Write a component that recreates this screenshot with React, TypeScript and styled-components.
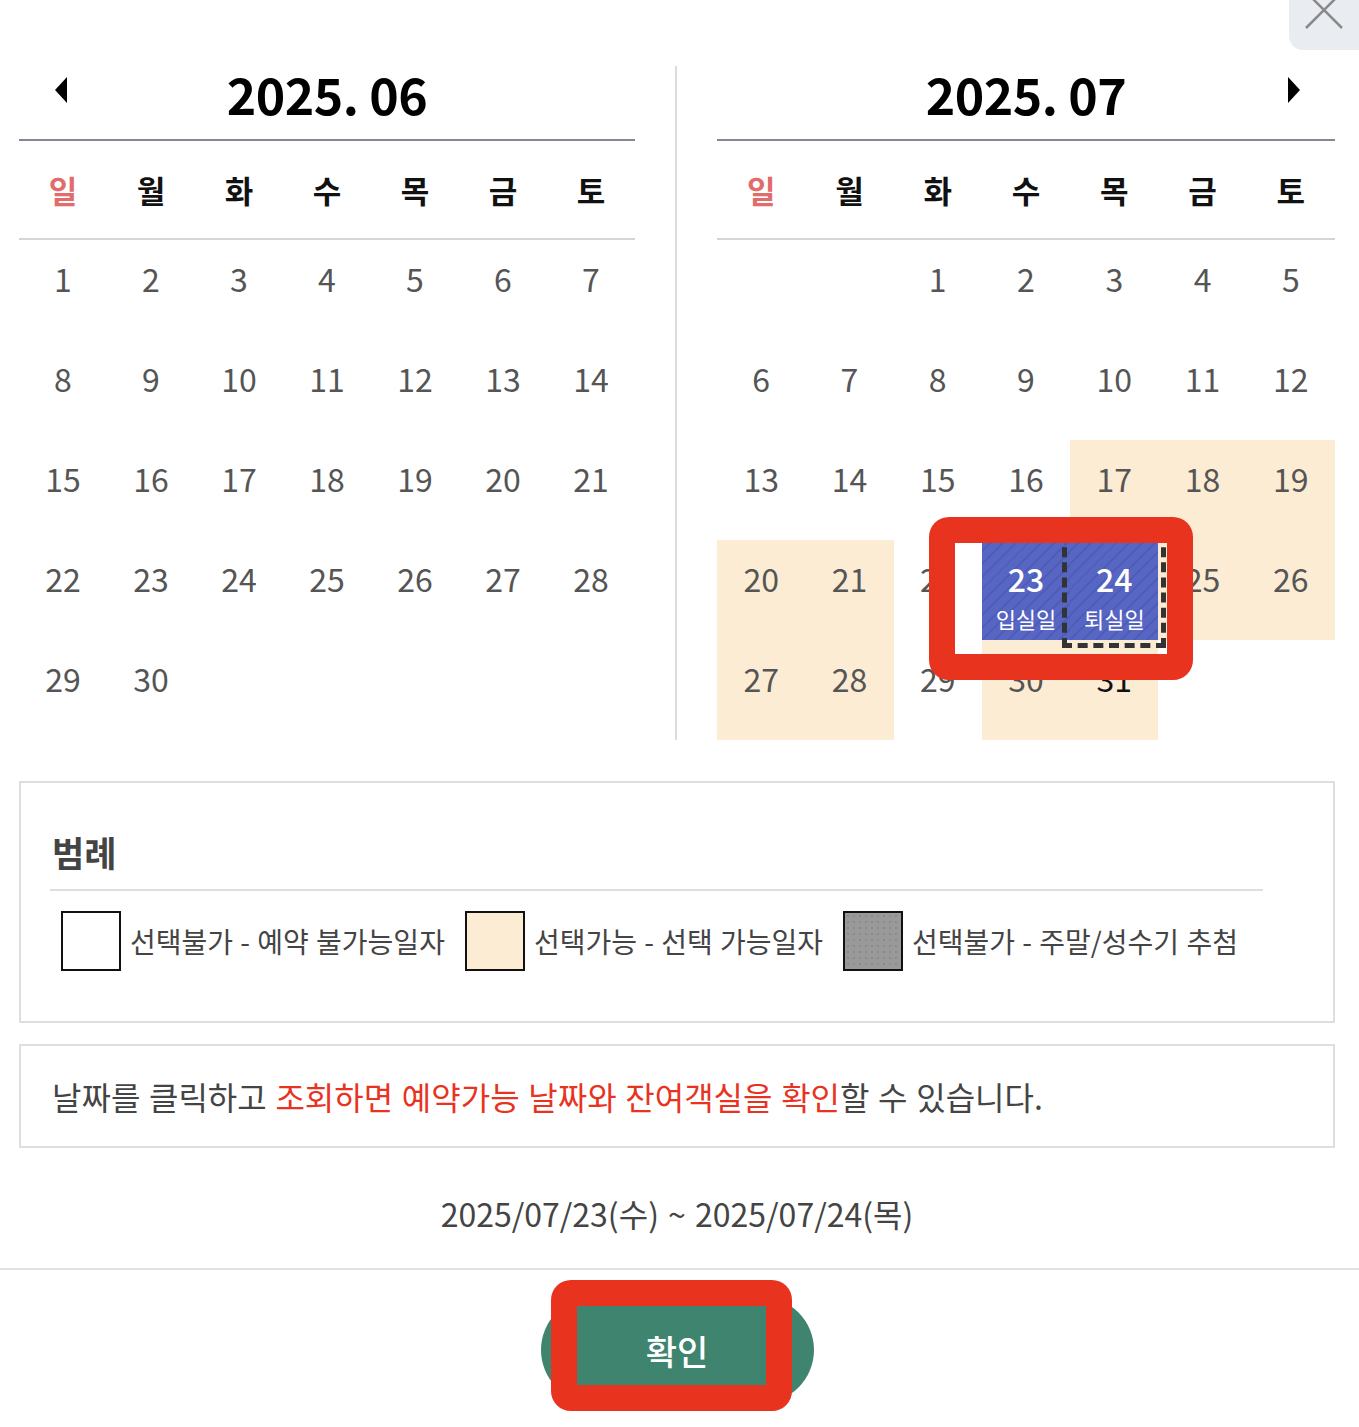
import React from 'react';
import styled, { createGlobalStyle, css } from 'styled-components';

const GlobalStyle = createGlobalStyle`
  html, body {
    margin: 0;
    padding: 0;
    background: #fff;
  }
  body {
    font-family: "Noto Sans CJK KR", "Noto Sans", sans-serif;
    color: #444;
  }
  * {
    box-sizing: border-box;
  }
`;

const Page = styled.div`
  position: relative;
  width: 1359px;
  min-height: 1427px;
  overflow: hidden;
`;

const CloseButton = styled.button`
  position: absolute;
  top: -20px;
  right: 0;
  width: 70px;
  height: 70px;
  border: 0;
  padding: 0;
  background: #e9ecf0;
  border-bottom-left-radius: 14px;
  display: flex;
  align-items: center;
  justify-content: center;
  padding-bottom: 10px;
  cursor: pointer;
`;

const Content = styled.div`
  padding: 50px 24px 0 19px;
`;

const Calendars = styled.div`
  display: flex;
  align-items: stretch;
`;

const Calendar = styled.div<{ $w: number }>`
  width: ${(p) => p.$w}px;
  flex: none;
`;

const Divider = styled.div`
  width: 82px;
  flex: none;
  display: flex;
  justify-content: center;
  padding-top: 16px;
  &::before {
    content: '';
    width: 2px;
    background: #dcdcdc;
  }
`;

const TitleRow = styled.div`
  display: grid;
  grid-template-columns: 1fr auto 1fr;
  align-items: center;
  height: 91px;
  border-bottom: 2px solid #858892;
  padding-bottom: 3px;
`;

const Title = styled.h2`
  margin: 0;
  font-size: 50px;
  font-weight: 700;
  color: #000;
  letter-spacing: -0.5px;
  line-height: 1;
`;

const Arrow = styled.span<{ $dir: 'prev' | 'next' }>`
  width: 0;
  height: 0;
  border-top: 13px solid transparent;
  border-bottom: 13px solid transparent;
  margin-bottom: 6px;
  ${(p) =>
    p.$dir === 'prev'
      ? css`
          justify-self: start;
          margin-left: 36px;
          border-right: 12px solid #000;
        `
      : css`
          justify-self: end;
          margin-right: 35px;
          border-left: 12px solid #000;
        `}
`;

const WeekRow = styled.div`
  display: grid;
  grid-template-columns: repeat(7, 1fr);
  height: 99px;
  align-items: center;
  border-bottom: 2px solid #d5d5d5;
`;

const WeekDay = styled.span<{ $sun?: boolean }>`
  text-align: center;
  font-size: 31px;
  font-weight: 700;
  color: ${(p) => (p.$sun ? '#e26b6b' : '#111')};
`;

const DayGrid = styled.div`
  position: relative;
  display: grid;
  grid-template-columns: repeat(7, 1fr);
  grid-auto-rows: 100px;
`;

type Tone = 'none' | 'cream' | 'sel';

const Day = styled.div<{ $tone: Tone; $dark?: boolean; $checkout?: boolean }>`
  display: flex;
  flex-direction: column;
  align-items: center;
  padding-top: 16px;
  color: ${(p) => (p.$dark ? '#111' : '#555')};
  background: ${(p) => (p.$tone === 'cream' ? '#fcecd4' : 'transparent')};
  ${(p) =>
    p.$tone === 'sel' &&
    css`
      color: #fff;
      background: repeating-linear-gradient(
        135deg,
        #5765c3 0 7px,
        #4f5cb9 7px 9px
      );
    `}
  ${(p) =>
    p.$checkout &&
    css`
      outline: 5px dashed #333;
      outline-offset: 3px;
      position: relative;
      z-index: 1;
    `}
`;

const DayNum = styled.span<{ $sel?: boolean }>`
  font-size: 32px;
  line-height: 44px;
  font-weight: ${(p) => (p.$sel ? 500 : 400)};
`;

const DayLabel = styled.span`
  font-size: 22px;
  line-height: 36px;
  color: #fff;
`;

const Highlight = styled.div<{ $l: number; $t: number; $w: number; $h: number }>`
  position: absolute;
  left: ${(p) => p.$l}px;
  top: ${(p) => p.$t}px;
  width: ${(p) => p.$w}px;
  height: ${(p) => p.$h}px;
  border: 26px solid #e8331f;
  border-radius: 20px;
  z-index: 5;
  pointer-events: none;
`;

const LegendBox = styled.section`
  margin-top: 41px;
  border: 2px solid #dedede;
  padding: 44px 70px 50px 29px;
`;

const LegendTitle = styled.h3`
  margin: 0;
  font-size: 35px;
  line-height: 50px;
  font-weight: 700;
  color: #444;
  padding: 0 0 12px 2px;
  border-bottom: 2px solid #dedede;
`;

const LegendRow = styled.div`
  display: flex;
  align-items: center;
  gap: 20px;
  margin-top: 20px;
  padding-left: 11px;
`;

const LegendItem = styled.div`
  display: flex;
  align-items: center;
  gap: 9px;
  font-size: 28px;
  color: #444;
  word-spacing: 1px;
`;

const Swatch = styled.span<{ $kind: 'white' | 'cream' | 'gray' }>`
  width: 60px;
  height: 60px;
  border: 2px solid #111;
  flex: none;
  background: ${(p) =>
    p.$kind === 'white' ? '#fff' : p.$kind === 'cream' ? '#fcecd4' : '#999'};
  ${(p) =>
    p.$kind === 'gray' &&
    css`
      background-image: radial-gradient(#8a8a8a 1px, transparent 1.5px);
      background-size: 6px 6px;
    `}
`;

const NoticeBox = styled.div`
  margin-top: 21px;
  border: 2px solid #dedede;
  height: 104px;
  padding: 0 31px;
  display: flex;
  align-items: center;
  font-size: 32px;
  color: #444;
  word-spacing: 1.5px;
`;

const Red = styled.span`
  color: #e8331f;
`;

const RangeText = styled.p`
  margin: 0;
  padding: 42px 0 32px;
  text-align: center;
  font-size: 32px;
  line-height: 46px;
  color: #444;
  word-spacing: 2px;
`;

const Footer = styled.footer`
  border-top: 2px solid #e2e2e2;
  padding: 27px 0 25px;
  display: flex;
  justify-content: center;
`;

const ButtonWrap = styled.div`
  position: relative;
  margin-left: -5px;
`;

const ConfirmButton = styled.button`
  width: 273px;
  height: 106px;
  border: 0;
  border-radius: 53px;
  background: #3f846f;
  color: #fff;
  font-family: inherit;
  font-size: 34px;
  font-weight: 500;
  cursor: pointer;
`;

type Cell = {
  d?: number;
  tone?: Tone;
  label?: string;
  dark?: boolean;
  checkout?: boolean;
};

const WEEK = ['일', '월', '화', '수', '목', '금', '토'];

const junCells: Cell[] = Array.from({ length: 30 }, (_, i) => ({ d: i + 1 }));

const creamJul = new Set([17, 18, 19, 20, 21, 25, 26, 27, 28, 30, 31]);
const julCells: Cell[] = [
  {},
  {},
  ...Array.from({ length: 31 }, (_, i) => {
    const d = i + 1;
    if (d === 23) return { d, tone: 'sel' as Tone, label: '입실일' };
    if (d === 24) return { d, tone: 'sel' as Tone, label: '퇴실일', checkout: true };
    return {
      d,
      tone: (creamJul.has(d) ? 'cream' : 'none') as Tone,
      dark: d === 31,
    };
  }),
];

function MonthView({
  title,
  cells,
  width,
  arrow,
  children,
}: {
  title: string;
  cells: Cell[];
  width: number;
  arrow: 'prev' | 'next';
  children?: React.ReactNode;
}) {
  return (
    <Calendar $w={width}>
      <TitleRow>
        {arrow === 'prev' ? <Arrow $dir="prev" /> : <span />}
        <Title>{title}</Title>
        {arrow === 'next' ? <Arrow $dir="next" /> : <span />}
      </TitleRow>
      <WeekRow>
        {WEEK.map((w, i) => (
          <WeekDay key={w} $sun={i === 0}>
            {w}
          </WeekDay>
        ))}
      </WeekRow>
      <DayGrid>
        {cells.map((c, i) => (
          <Day key={i} $tone={c.tone ?? 'none'} $dark={c.dark} $checkout={c.checkout}>
            {c.d && <DayNum $sel={c.tone === 'sel'}>{c.d}</DayNum>}
            {c.label && <DayLabel>{c.label}</DayLabel>}
          </Day>
        ))}
        {children}
      </DayGrid>
    </Calendar>
  );
}

export default function App() {
  return (
    <Page>
      <GlobalStyle />
      <CloseButton aria-label="닫기">
        <svg width="40" height="40" viewBox="0 0 40 40">
          <path d="M2 2 L38 38 M38 2 L2 38" stroke="#8a8a8a" strokeWidth="2.5" />
        </svg>
      </CloseButton>
      <Content>
        <Calendars>
          <MonthView title="2025. 06" cells={junCells} width={616} arrow="prev" />
          <Divider />
          <MonthView title="2025. 07" cells={julCells} width={618} arrow="next">
            <Highlight $l={212} $t={277} $w={264} $h={163} />
          </MonthView>
        </Calendars>

        <LegendBox>
          <LegendTitle>범례</LegendTitle>
          <LegendRow>
            <LegendItem>
              <Swatch $kind="white" />
              선택불가 - 예약 불가능일자
            </LegendItem>
            <LegendItem>
              <Swatch $kind="cream" />
              선택가능 - 선택 가능일자
            </LegendItem>
            <LegendItem>
              <Swatch $kind="gray" />
              선택불가 - 주말/성수기 추첨
            </LegendItem>
          </LegendRow>
        </LegendBox>

        <NoticeBox>
          <span>
            날짜를 클릭하고 <Red>조회하면 예약가능 날짜와 잔여객실을 확인</Red>할 수 있습니다.
          </span>
        </NoticeBox>

        <RangeText>2025/07/23(수) ~ 2025/07/24(목)</RangeText>
      </Content>

      <Footer>
        <ButtonWrap>
          <ConfirmButton>확인</ConfirmButton>
          <Highlight $l={10} $t={-17} $w={241} $h={131} />
        </ButtonWrap>
      </Footer>
    </Page>
  );
}
